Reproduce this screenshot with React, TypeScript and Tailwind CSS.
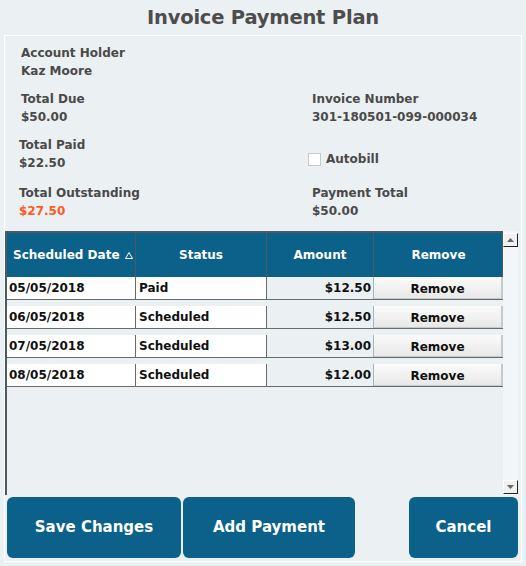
import React from "react";

const payments = [
  { date: "05/05/2018", status: "Paid", amount: "$12.50" },
  { date: "06/05/2018", status: "Scheduled", amount: "$12.50" },
  { date: "07/05/2018", status: "Scheduled", amount: "$13.00" },
  { date: "08/05/2018", status: "Scheduled", amount: "$12.00" },
];

function Field({ label, value, valueClass = "" }: { label: string; value: string; valueClass?: string }) {
  return (
    <div className="flex flex-col">
      <div className="h-[18px] leading-[18px]">{label}</div>
      <div className={`h-[18px] leading-[18px] ${valueClass}`}>{value}</div>
    </div>
  );
}

function ScrollArrow({ down }: { down?: boolean }) {
  return (
    <div className="w-[15px] h-[14px] bg-[#f0f0f0] border-r border-b border-[#222] border-t border-l border-t-white border-l-white flex items-center justify-center">
      <svg width="7" height="4" viewBox="0 0 7 4">
        {down ? <path d="M0 0h7L3.5 4z" fill="#666" /> : <path d="M0 4h7L3.5 0z" fill="#666" />}
      </svg>
    </div>
  );
}

export default function App() {
  return (
    <div className="w-[526px] h-[566px] bg-[#ebf0f3] font-['DejaVu_Sans',sans-serif] font-bold text-[12px] text-[#4a4a4a] overflow-hidden">
      <h1 className="h-[35px] flex items-center justify-center text-[19.5px] text-[#4d4d4d] tracking-[-0.2px]">
        Invoice Payment Plan
      </h1>

      <div className="mx-[4px] h-[527px] border border-white flex flex-col">
        {/* account summary */}
        <div className="grid grid-cols-[291px_1fr] content-start pl-[16px] pt-[8px] h-[195px]">
          <div className="col-span-2 mb-[10px]">
            <Field label="Account Holder" value="Kaz Moore" />
          </div>
          <div className="mb-[10px]">
            <Field label="Total Due" value="$50.00" />
          </div>
          <div className="mb-[10px]">
            <Field label="Invoice Number" value="301-180501-099-000034" />
          </div>
          <div className="-ml-[2px] mb-[12px]">
            <Field label="Total Paid" value="$22.50" />
          </div>
          <div className="-ml-[4px] flex items-center gap-[5px] pt-[8px] pb-[10px]">
            <span className="w-[13px] h-[13px] bg-white border border-[#c8c8c8]" />
            <span>Autobill</span>
          </div>
          <div className="-ml-[2px]">
            <Field label="Total Outstanding" value="$27.50" valueClass="text-[#ff5b1f]" />
          </div>
          <div>
            <Field label="Payment Total" value="$50.00" />
          </div>
        </div>

        {/* payments grid */}
        <div className="flex h-[264px]">
          <div className="w-[498px] border-l-2 border-t-2 border-[#4a5a63] flex flex-col">
            <div className="grid grid-cols-[129px_131px_107px_129px] h-[44px] bg-[#0b6189] text-white border-r border-[#4a5a63]">
              <div className="flex items-center pl-[6px] border-r border-[#4a5a63]">
                Scheduled Date
                <svg className="ml-[5px]" width="8" height="7" viewBox="0 0 8 7">
                  <path d="M4 0.5L7.5 6.5H0.5Z" fill="none" stroke="white" strokeWidth="1" />
                </svg>
              </div>
              <div className="flex items-center justify-center border-r border-[#4a5a63]">Status</div>
              <div className="flex items-center justify-center border-r border-[#4a5a63]">Amount</div>
              <div className="flex items-center justify-center">Remove</div>
            </div>
            <div className="flex flex-col gap-[6px]">
              {payments.map((p) => (
                <div
                  key={p.date}
                  className="grid grid-cols-[129px_131px_107px_129px] h-[23px] text-[#111] border-b border-[#6a6a6a]"
                >
                  <div className="bg-white flex items-center pl-[2px] border-r border-[#6a6a6a]">{p.date}</div>
                  <div className="bg-white flex items-center pl-[3px] border-r border-[#6a6a6a]">{p.status}</div>
                  <div className="bg-[#ebf0f3] flex items-center justify-end pr-[2px] border-r border-[#aab4ba]">
                    {p.amount}
                  </div>
                  <button className="bg-gradient-to-b from-[#fbfbfb] to-[#e8e8e8] border-r-2 border-b border-[#c4c9cc] flex items-center justify-center pt-[2px] text-[#111]">
                    Remove
                  </button>
                </div>
              ))}
            </div>
          </div>
          <div className="w-[15px] bg-[#f3f6f8] flex flex-col justify-between pt-[2px] pb-[1px]">
            <ScrollArrow />
            <ScrollArrow down />
          </div>
        </div>

        {/* actions */}
        <div className="flex pl-[2px] pt-[2px] gap-[2px] text-white text-[15px] [text-shadow:1px_1px_1px_rgba(0,0,0,0.45)]">
          <button className="w-[174px] h-[61px] bg-[#0b6189] rounded-[6px]">Save Changes</button>
          <button className="w-[172px] h-[61px] bg-[#0b6189] rounded-[6px]">Add Payment</button>
          <button className="ml-auto mr-[3px] w-[109px] h-[61px] bg-[#0b6189] rounded-[6px]">Cancel</button>
        </div>
      </div>
    </div>
  );
}
